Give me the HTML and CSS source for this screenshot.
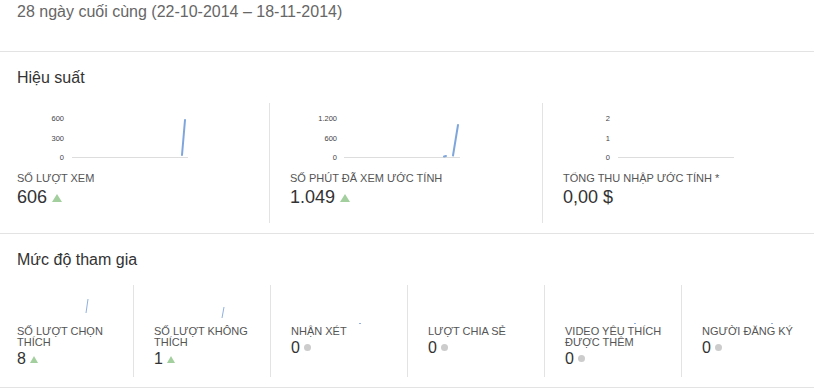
FILE: index.html
```html
<!DOCTYPE html>
<html lang="vi">
<head>
    <meta charset="utf-8">
    <title>Số liệu kênh</title>
    <link rel="stylesheet" href="styles.css">
</head>
<body>
    <div class="range">28 ngày cuối cùng (22-10-2014 – 18-11-2014)</div>

    <div class="section">
        <h2 class="section-title">Hiệu suất</h2>
        <div class="perf">
            <div class="perf-col">
                <svg class="chart" width="172" height="56" viewBox="0 0 172 56">
                    <text x="47" y="13">600</text>
                    <text x="47" y="33">300</text>
                    <text x="47" y="52">0</text>
                    <line class="axis" x1="55" y1="49.5" x2="171" y2="49.5"/>
                    <line class="trend" x1="165" y1="47" x2="168" y2="12"/>
                </svg>
                <div class="label">Số lượt xem</div>
                <div class="value">606 <span class="up"></span></div>
            </div>
            <div class="perf-col">
                <svg class="chart" width="172" height="56" viewBox="0 0 172 56">
                    <text x="47" y="13">1.200</text>
                    <text x="47" y="33">600</text>
                    <text x="47" y="52">0</text>
                    <line class="axis" x1="54" y1="49.5" x2="170" y2="49.5"/>
                    <line class="trend" x1="154" y1="48.5" x2="156" y2="48"/>
                    <line class="trend" x1="163" y1="47.5" x2="168" y2="17"/>
                </svg>
                <div class="label">Số phút đã xem ước tính</div>
                <div class="value">1.049 <span class="up"></span></div>
            </div>
            <div class="perf-col">
                <svg class="chart" width="172" height="56" viewBox="0 0 172 56">
                    <text x="47" y="13">2</text>
                    <text x="47" y="33">1</text>
                    <text x="47" y="52">0</text>
                    <line class="axis" x1="55" y1="49.5" x2="171" y2="49.5"/>
                </svg>
                <div class="label">Tổng thu nhập ước tính *</div>
                <div class="value">0,00 $</div>
            </div>
        </div>
    </div>

    <div class="section last">
        <h2 class="section-title">Mức độ tham gia</h2>
        <div class="engage">
            <div class="eng-col">
                <svg class="spark" width="110" height="41" viewBox="0 0 110 41">
                    <line class="thin" x1="71" y1="14" x2="69" y2="28"/>
                </svg>
                <div class="label">Số lượt chọn thích</div>
                <div class="count">8 <span class="up small"></span></div>
            </div>
            <div class="eng-col">
                <svg class="spark" width="110" height="41" viewBox="0 0 110 41">
                    <line class="thin" x1="70" y1="22" x2="68" y2="33"/>
                </svg>
                <div class="label">Số lượt không thích</div>
                <div class="count">1 <span class="up small"></span></div>
            </div>
            <div class="eng-col">
                <svg class="spark" width="110" height="41" viewBox="0 0 110 41">
                    <line class="thin" x1="68" y1="38.5" x2="70" y2="38.5"/>
                </svg>
                <div class="label">Nhận xét</div>
                <div class="count">0 <span class="dot"></span></div>
            </div>
            <div class="eng-col">
                <svg class="spark" width="110" height="41" viewBox="0 0 110 41"></svg>
                <div class="label">Lượt chia sẻ</div>
                <div class="count">0 <span class="dot"></span></div>
            </div>
            <div class="eng-col">
                <svg class="spark" width="110" height="41" viewBox="0 0 110 41">
                    <line class="thin" x1="69" y1="38.5" x2="71" y2="38.5"/>
                </svg>
                <div class="label">Video yêu thích được thêm</div>
                <div class="count">0 <span class="dot"></span></div>
            </div>
            <div class="eng-col">
                <svg class="spark" width="110" height="41" viewBox="0 0 110 41">
                    <line class="thin" x1="69" y1="38.5" x2="71" y2="38.5"/>
                </svg>
                <div class="label">Người đăng ký</div>
                <div class="count">0 <span class="dot"></span></div>
            </div>
        </div>
    </div>
</body>
</html>
```

FILE: styles.css
```css
body {
    margin: 0;
    width: 814px;
    overflow: hidden;
    font-family: "Liberation Sans", Arial, sans-serif;
    color: #333;
    background: #fff;
}

.range {
    height: 48px;
    padding: 3px 17px 0;
    font-size: 16px;
    line-height: 18px;
    color: #666;
}

.section {
    border-top: 1px solid #e3e3e3;
    padding: 17px 0 10px 17px;
}
.section.last {
    border-bottom: 1px solid #e3e3e3;
}

.section-title {
    margin: 0 0 16px;
    font-size: 16px;
    line-height: 18px;
    font-weight: normal;
    color: #333;
}

/* Hiệu suất */
.perf {
    display: flex;
    height: 120px;
}
.perf-col {
    flex: none;
    width: 252px;
    padding-left: 20px;
    border-right: 1px solid #e3e3e3;
}
.perf-col:first-child {
    padding-left: 0;
}
.perf-col:last-child {
    width: 230px;
    border-right: none;
}

.chart {
    display: block;
    margin-top: 5px;
}
.chart text {
    font-family: "Liberation Sans", Arial, sans-serif;
    font-size: 7.5px;
    fill: #444;
    text-anchor: end;
}
.axis {
    stroke: #ddd;
    stroke-width: 1;
}
.trend {
    stroke: #7fa6dc;
    stroke-width: 2;
    stroke-linecap: round;
}
.thin {
    stroke: #8fb0e0;
    stroke-width: 1;
}

.label {
    font-size: 11px;
    line-height: 13px;
    text-transform: uppercase;
    color: #555;
}
.perf .label {
    margin-top: 8px;
}
.value {
    margin-top: 2px;
    font-size: 18px;
    line-height: 20px;
    color: #333;
}

.up {
    display: inline-block;
    width: 0;
    height: 0;
    border-left: 5px solid transparent;
    border-right: 5px solid transparent;
    border-bottom: 8px solid #a3cf9e;
    vertical-align: 1px;
}
.up.small {
    border-left-width: 4px;
    border-right-width: 4px;
    border-bottom-width: 7px;
}

/* Mức độ tham gia */
.engage {
    display: flex;
    height: 92px;
}
.eng-col {
    flex: none;
    width: 116px;
    padding-left: 20px;
    border-right: 1px solid #e3e3e3;
}
.eng-col:first-child {
    padding-left: 0;
}
.eng-col:last-child {
    width: 112px;
    border-right: none;
}
.spark {
    display: block;
}
.engage .label {
    line-height: 11px;
    padding-right: 10px;
}
.eng-col:last-child .label {
    padding-right: 0;
}
.count {
    margin-top: 2px;
    font-size: 16px;
    line-height: 18px;
    color: #333;
}
.dot {
    display: inline-block;
    width: 7px;
    height: 7px;
    border-radius: 50%;
    background: #ccc;
    vertical-align: 2px;
}
```
